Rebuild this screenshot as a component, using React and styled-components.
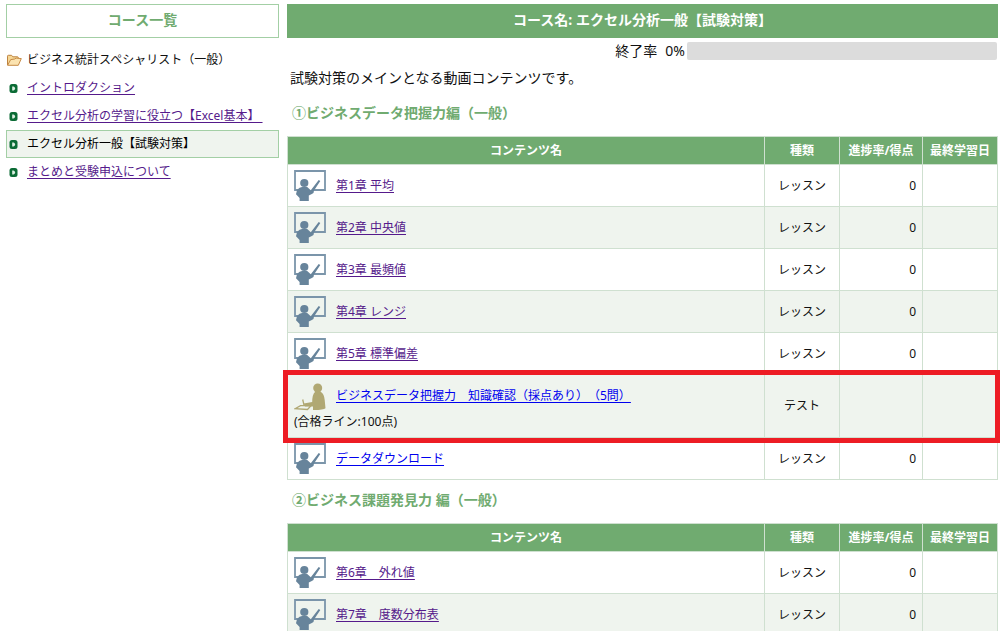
import React from 'react';
import styled, { createGlobalStyle, css } from 'styled-components';

const colors = {
  green: '#70ab70',
  greenBorder: '#a3cfa5',
  line: '#cfe0d0',
  stripe: '#eff4ee',
  visited: '#551a8b',
  link: '#0000ee',
  gray: '#dcdcdc',
  red: '#ed1c24',
};

const GlobalStyle = createGlobalStyle`
  * {
    box-sizing: border-box;
  }

  body {
    margin: 0;
    background: #fff;
    color: #111;
    font-family: 'Noto Sans', 'Noto Sans CJK JP', sans-serif;
    font-size: 12px;
    line-height: 20px;
    text-spacing-trim: space-all;
  }
`;

const Page = styled.div`
  display: grid;
  grid-template-columns: 273px minmax(0, 1fr);
  align-items: start;
  gap: 8px;
  padding: 4px 2px 0 6px;
`;

const SideTitle = styled.h2`
  display: flex;
  align-items: center;
  justify-content: center;
  height: 34px;
  margin: 0 0 8px;
  padding-bottom: 2px;
  border: 1px solid ${colors.greenBorder};
  color: ${colors.green};
  font-size: 14px;
`;

const SideGroup = styled.div`
  display: flex;
  align-items: center;
  gap: 5px;
  height: 28px;
`;

const CourseList = styled.ul`
  margin: 0;
  padding: 0;
  list-style: none;
`;

const CourseItem = styled.li`
  display: flex;
  align-items: center;
  gap: 9px;
  height: 28px;
  padding-left: 2px;
  border: 1px solid transparent;
  ${({ $active }) =>
    $active &&
    css`
      border-color: ${colors.greenBorder};
      background: ${colors.stripe};
      color: #000;
    `}
`;

const TextLink = styled.a`
  color: ${({ $visited }) => ($visited ? colors.visited : colors.link)};
  text-decoration: underline;
  text-underline-offset: 2px;
  white-space: pre-wrap;
`;

const MainTitle = styled.h1`
  display: flex;
  align-items: center;
  justify-content: center;
  height: 34px;
  margin: 0;
  padding-bottom: 2px;
  background: ${colors.green};
  color: #fff;
  font-size: 14px;
`;

const ProgressRow = styled.div`
  display: flex;
  align-items: center;
  justify-content: flex-end;
  gap: 2px;
  height: 26px;
  padding-right: 1px;
  font-size: 14px;
`;

const ProgressLabel = styled.label`
  display: flex;
  gap: 8px;
`;

const ProgressBar = styled.progress`
  appearance: none;
  width: 310px;
  height: 18px;
  border: 0;
  border-radius: 2px;
  overflow: hidden;

  &::-webkit-progress-bar {
    background: ${colors.gray};
  }

  &::-webkit-progress-value {
    background: ${colors.green};
  }
`;

const Description = styled.p`
  margin: 4px 3px 15px;
  font-size: 14px;
`;

const SectionTitle = styled.h3`
  margin: 0;
  padding: 0 5px 13px;
  color: ${colors.green};
  font-size: 14px;
`;

const Section = styled.section`
  margin-bottom: 10px;
`;

const Table = styled.table`
  width: 100%;
  table-layout: fixed;
  border-collapse: collapse;
`;

const HeadCell = styled.th`
  width: ${({ $width }) => $width || 'auto'};
  height: 28px;
  padding: 0;
  border: 1px solid ${colors.line};
  background: ${colors.green};
  color: #fff;
  white-space: nowrap;
`;

const Row = styled.tr`
  position: relative;
  height: ${({ $tall }) => ($tall ? '63px' : '42px')};
  background: ${({ $striped }) => ($striped ? colors.stripe : '#fff')};
`;

const RowMarker = styled.span`
  position: absolute;
  inset: -5px -2px -5px -5px;
  border: 5px solid ${colors.red};
  pointer-events: none;
  z-index: 1;
`;

const Cell = styled.td`
  padding: 0 6px;
  border: 1px solid ${colors.line};
  text-align: ${({ $align }) => $align || 'left'};
`;

const Content = styled.div`
  display: flex;
  align-items: center;
  gap: 10px;
`;

const Icon = styled.svg`
  display: block;
  flex: none;
`;

function FolderIcon() {
  return (
    <Icon width="16" height="16" viewBox="0 0 16 16" aria-hidden="true">
      <path
        d="M1.5 13V4.2q0-.9.9-.9h3.2l1.2 1.5h4.7q.8 0 .8.9v1.6"
        fill="#f6d795"
        stroke="#bd8340"
      />
      <path
        d="M1.6 13.3 4.7 7.6l4-.6 1.4-.9 5.2.5-3 6.7Z"
        fill="#fbe3b0"
        stroke="#c68a45"
        strokeLinejoin="round"
      />
    </Icon>
  );
}

function BulletIcon() {
  return (
    <Icon width="9" height="9" viewBox="0 0 9 9" aria-hidden="true">
      <rect x=".5" width="8" height="9" rx="2.5" fill="#0b6b35" />
      <path d="M3.2 2.5h1.3q1.6.3 1.6 2t-1.6 2H3.2Z" fill="#dcefe2" />
    </Icon>
  );
}

function LessonIcon() {
  return (
    <Icon width="32" height="32" viewBox="0 0 32 32" aria-hidden="true">
      <path
        d="M4 20H1V1h30v19H19"
        fill="none"
        stroke="#7b95aa"
        strokeWidth="1.8"
      />
      <circle cx="10.3" cy="13" r="4.1" fill="#67849b" />
      <path
        d="M2 24.2q.6-6.4 6-7.2h5.2l3.6 3.2 7.9-10.3 1.6 1.1-6.3 9.4q.2 2.6-2.2 3.6l-3 1.4V31H5.6v-3Z"
        fill="#67849b"
      />
    </Icon>
  );
}

function TestIcon() {
  return (
    <Icon width="32" height="32" viewBox="0 -3 32 32" aria-hidden="true">
      <circle cx="23.7" cy="5" r="4.5" fill="#b0a873" />
      <path
        d="M21 9h6q3.2 2 3.7 8l.8 8.2q-2 1.9-12.5 1.8v-3.4h-8l-1.3-3L18.2 19q0-7.500 2.800-10Z"
        fill="#b0a873"
      />
      <path
        d="m8.700 16.500 1.500 6.500M1 25.700l5.500-3h10.500l-3.500 3.800Z"
        fill="none"
        stroke="#b0a873"
        strokeWidth="1.3"
      />
    </Icon>
  );
}

const courses = [
  { name: 'イントロダクション' },
  { name: 'エクセル分析の学習に役立つ【Excel基本】 ' },
  { name: 'エクセル分析一般【試験対策】', active: true },
  { name: 'まとめと受験申込について' },
];

const sections = [
  {
    title: '①ビジネスデータ把握力編（一般）',
    rows: [
      { name: '第1章 平均', visited: true },
      { name: '第2章 中央値', visited: true },
      { name: '第3章 最頻値', visited: true },
      { name: '第4章 レンジ', visited: true },
      { name: '第5章 標準偏差', visited: true },
      {
        name: 'ビジネスデータ把握力　知識確認（採点あり）（5問）',
        test: true,
        note: '(合格ライン:100点)',
      },
      { name: 'データダウンロード' },
    ],
  },
  {
    title: '②ビジネス課題発見力 編（一般）',
    rows: [
      { name: '第6章　外れ値', visited: true },
      { name: '第7章　度数分布表', visited: true },
    ],
  },
];

function ContentTable({ rows }) {
  return (
    <Table>
      <thead>
        <tr>
          <HeadCell>コンテンツ名</HeadCell>
          <HeadCell $width="75px">種類</HeadCell>
          <HeadCell $width="83px">進捗率/得点</HeadCell>
          <HeadCell $width="75px">最終学習日</HeadCell>
        </tr>
      </thead>
      <tbody>
        {rows.map((row, index) => (
          <Row key={row.name} $striped={index % 2 === 1} $tall={row.test}>
            <Cell>
              <Content>
                {row.test ? <TestIcon /> : <LessonIcon />}
                <TextLink href="#" $visited={row.visited}>
                  {row.name}
                </TextLink>
              </Content>
              {row.note}
              {row.test && <RowMarker />}
            </Cell>
            <Cell $align="center">{row.test ? 'テスト' : 'レッスン'}</Cell>
            <Cell $align="right">{row.test ? '' : '0'}</Cell>
            <Cell />
          </Row>
        ))}
      </tbody>
    </Table>
  );
}

export default function App() {
  return (
    <>
      <GlobalStyle />
      <Page>
        <nav>
          <SideTitle>コース一覧</SideTitle>
          <SideGroup>
            <FolderIcon />
            ビジネス統計スペシャリスト（一般）
          </SideGroup>
          <CourseList>
            {courses.map((course) => (
              <CourseItem key={course.name} $active={course.active}>
                <BulletIcon />
                {course.active ? (
                  course.name
                ) : (
                  <TextLink href="#" $visited>
                    {course.name}
                  </TextLink>
                )}
              </CourseItem>
            ))}
          </CourseList>
        </nav>
        <main>
          <MainTitle>コース名: エクセル分析一般【試験対策】</MainTitle>
          <ProgressRow>
            <ProgressLabel htmlFor="completion">
              <span>終了率</span>
              <span>0%</span>
            </ProgressLabel>
            <ProgressBar id="completion" value="0" max="100" />
          </ProgressRow>
          <Description>試験対策のメインとなる動画コンテンツです。</Description>
          {sections.map((section) => (
            <Section key={section.title}>
              <SectionTitle>{section.title}</SectionTitle>
              <ContentTable rows={section.rows} />
            </Section>
          ))}
        </main>
      </Page>
    </>
  );
}
